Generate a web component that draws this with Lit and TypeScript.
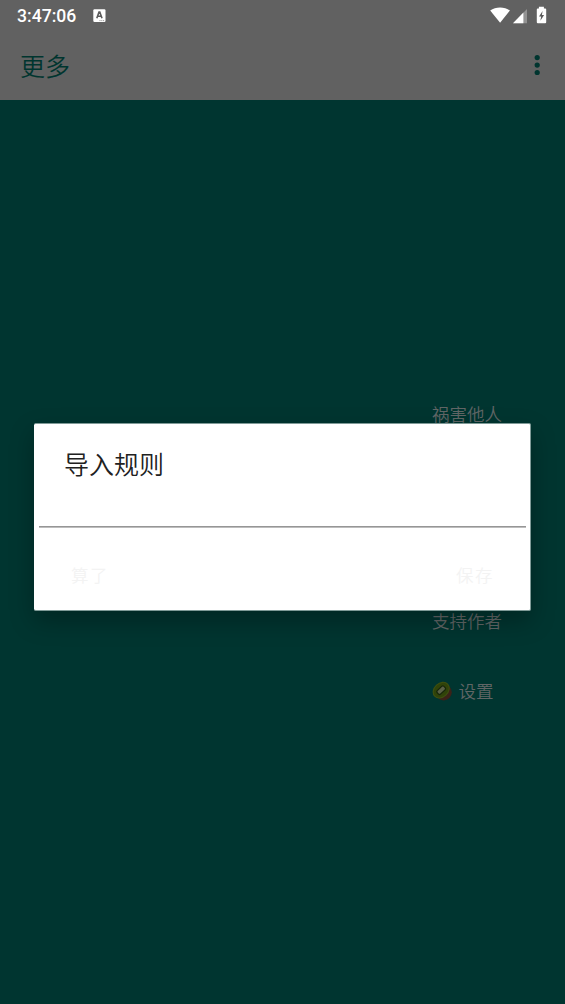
/**
 * <app-root> — "More" screen with the rule import dialog open above it.
 */

import { LitElement, html, css, svg } from "lit";
import { customElement, state } from "lit/decorators.js";

/* ── Data ────────────────────────────────────────────────────────────── */

interface MenuEntry {
  label: string;
  row: number;
  icon?: "kiwi";
}

const MENU: MenuEntry[] = [
  { label: "祸害他人", row: 1 },
  { label: "支持作者", row: 4 },
  { label: "设置", row: 5, icon: "kiwi" },
];

/* ── Icons ───────────────────────────────────────────────────────────── */

const keyboardIcon = html`
  <svg class="keyboard" width="13" height="14" viewBox="0 0 13 14">
    <rect x="0.3" y="0.2" width="12.2" height="12.8" rx="1.2" fill="#fff" />
    <path
      d="M3.8 9.2 6 3h.8l2.2 6.2M4.6 7.2h3.6"
      fill="none"
      stroke="#5c5c5c"
      stroke-width="1.6"
    />
    <path d="M6.5 11.6h1M8.3 11.6h1M10.1 11.6h1" stroke="#8a8a8a" stroke-width="0.9" />
  </svg>
`;

const statusIcons = html`
  <svg width="60" height="20" viewBox="0 0 60 20">
    <path d="M.2 4.4C5.6.5 14.5.5 19.9 4.4L10.1 16.8Z" fill="#fff" />
    <path d="M37 3v14.2H23Z" fill="#929292" />
    <path d="M33.4 6.6v10.6H23Z" fill="#fff" />
    <path
      d="M48.9.8h5v1.8h1.3q1 0 1 1v12.6q0 1-1 1h-7.4q-1 0-1-1V3.6q0-1 1-1h1.1Z"
      fill="#fff"
    />
    <path d="M52.6 5 49 10.6h2.1l-.7 4.2 3.7-5.7h-2.2Z" fill="#5c5c5c" />
  </svg>
`;

const overflowIcon = html`
  <svg width="6" height="22" viewBox="0 0 6 22">
    ${[3.6, 11.1, 18.5].map(
      (cy) => svg`<circle cx="3.2" cy=${cy} r="2.6" fill="#00352f" />`,
    )}
  </svg>
`;

const kiwiIcon = html`
  <svg class="kiwi" width="20" height="20" viewBox="0 0 20 20">
    <circle cx="11.6" cy="11.2" r="8.2" fill="#3b2218" />
    <g transform="rotate(-43 9.6 9.6)">
      <ellipse cx="9.6" cy="9" rx="9.4" ry="7.4" fill="#3e4f10" />
      <ellipse cx="9.6" cy="9" rx="8.3" ry="6.3" fill="#304309" />
      <rect x="4.4" y="6" width="10.4" height="6" rx="2" fill="#17260b" />
      <rect x="5.6" y="7.2" width="8" height="3.6" rx="1" fill="#5a6045" />
    </g>
  </svg>
`;

/* ── Component ───────────────────────────────────────────────────────── */

@customElement("app-root")
export class AppRoot extends LitElement {
  @state() private _dialogOpen = true;

  static styles = css`
    :host {
      position: relative;
      display: flex;
      flex-direction: column;
      width: 100%;
      height: 100vh;
      overflow: hidden;
      background: #003530;
      font-family: "Noto Sans CJK SC", sans-serif;
    }

    svg {
      display: block;
      flex: none;
    }

    header {
      height: 100px;
      background: #616161;
    }

    .status {
      display: flex;
      align-items: center;
      height: 31px;
      padding: 0 15px 0 17px;
    }

    .clock {
      flex: none;
      width: 76px;
      padding-top: 1px;
      font: 500 17.6px/32px Roboto, sans-serif;
      color: #fff;
    }

    .keyboard {
      margin-right: auto;
    }

    .toolbar {
      display: flex;
      align-items: center;
      justify-content: space-between;
      height: 67px;
      padding: 0 25px 0 20px;
      color: #00352f;
    }

    h1,
    h2 {
      margin: 0;
      font-size: 25px;
      font-weight: 350;
      line-height: 36px;
    }

    .menu {
      display: grid;
      grid-template-rows: repeat(4, 69px) 71px;
      margin: 279px 0 0 432px;
      padding: 0;
      list-style: none;
      font-size: 17.5px;
      font-weight: 350;
      color: #616666;
    }

    .menu li {
      display: flex;
      align-items: center;
    }

    .kiwi {
      margin-right: 6.5px;
    }

    .r1 {
      grid-row: 1;
    }

    .r4 {
      grid-row: 4;
    }

    .r5 {
      grid-row: 5;
    }

    .overlay {
      position: absolute;
      inset: 0;
      padding: 423px 34px 0;
    }

    .dialog {
      box-sizing: border-box;
      display: flex;
      flex-direction: column;
      height: 188px;
      padding: 21px 4px 0 5px;
      border: 1px solid #7f9a97;
      border-left: 0;
      border-radius: 2px;
      background: #fff;
      box-shadow: 0 10px 24px rgba(0, 0, 0, 0.28);
    }

    h2 {
      padding-left: 25px;
      color: #212121;
    }

    .field {
      height: 45px;
      border-bottom: 1px solid #969696;
      box-shadow: 0 1px #bdbdbd;
    }

    .actions {
      display: flex;
      justify-content: space-between;
      padding: 35px 32px 0 32px;
    }

    button {
      padding: 0;
      border: 0;
      background: none;
      font: 350 17.5px/26px "Noto Sans CJK SC", sans-serif;
      letter-spacing: 1.5px;
      color: #f3f3f3;
    }
  `;

  private _close(): void {
    this._dialogOpen = false;
  }

  /* ── Render ─────────────────────────────────────────────────────── */

  private _renderDialog() {
    return html`
      <div class="overlay">
        <section class="dialog" role="dialog">
          <h2>导入规则</h2>
          <div class="field"></div>
          <div class="actions">
            <button @click=${this._close}>算了</button>
            <button @click=${this._close}>保存</button>
          </div>
        </section>
      </div>
    `;
  }

  render() {
    return html`
      <header>
        <div class="status">
          <span class="clock">3:47:06</span>
          ${keyboardIcon} ${statusIcons}
        </div>
        <div class="toolbar">
          <h1>更多</h1>
          ${overflowIcon}
        </div>
      </header>
      <ul class="menu">
        ${MENU.map(
          (entry) => html`
            <li class="r${entry.row}">
              ${entry.icon ? kiwiIcon : ""}<span>${entry.label}</span>
            </li>
          `,
        )}
      </ul>
      ${this._dialogOpen ? this._renderDialog() : ""}
    `;
  }
}

declare global {
  interface HTMLElementTagNameMap {
    "app-root": AppRoot;
  }
}
